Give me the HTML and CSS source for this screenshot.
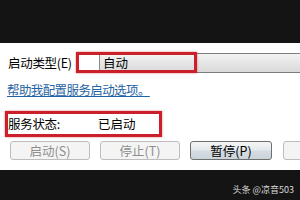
FILE: index.html
```html
<!DOCTYPE html>
<html lang="zh-CN">
<head>
<meta charset="utf-8">
<link rel="stylesheet" href="styles.css">
</head>
<body>
<div class="band-top"></div>
<div class="panel">
  <div class="row-type">
    <span class="label">启动类型(E)</span>
    <div class="combo">
      <span class="combo-blank"></span>
      <span class="combo-value">自动</span>
    </div>
  </div>
  <a class="help" href="#">帮助我配置服务启动选项。</a>
  <div class="row-status">
    <span class="status-label">服务状态:</span>
    <span class="status-value">已启动</span>
  </div>
  <div class="buttons">
    <span class="btn disabled">启动(S)</span>
    <span class="btn disabled">停止(T)</span>
    <span class="btn active">暂停(P)</span>
    <span class="btn disabled last"></span>
  </div>
  <div class="mark mark-type"></div>
  <div class="mark mark-status"></div>
</div>
<div class="band-bottom">
  <span class="watermark">头条 @凉音503</span>
</div>
</body>
</html>
```

FILE: styles.css
```css
html, body {
  margin: 0;
  padding: 0;
  width: 300px;
  height: 200px;
  overflow: hidden;
  background: #fff;
  font-family: "Noto Sans CJK SC", "Noto Sans", sans-serif;
  font-size: 12.5px;
  color: #000;
}

.band-top {
  height: 43px;
  background: #141414;
}

.panel {
  position: relative;
  height: 127px;
  display: flex;
  flex-direction: column;
  overflow: hidden;
}

.row-type {
  margin-top: 10px;
  height: 20px;
  display: flex;
  align-items: center;
}

.label {
  width: 71px;
  padding-left: 8px;
  line-height: 14px;
  white-space: nowrap;
  letter-spacing: -0.3px;
}

.combo {
  flex: 1;
  height: 20px;
  box-sizing: border-box;
  border-top: 1px solid #7c7c7c;
  border-bottom: 1px solid #7c7c7c;
  display: flex;
  align-items: stretch;
}

.combo-blank {
  width: 20px;
  background: #fff;
  border-right: 1px solid #8a8a8a;
}

.combo-value {
  flex: 1;
  padding-left: 3px;
  line-height: 18px;
  background: linear-gradient(#f3f3f3, #e6e6e6 50%, #d9d9d9);
}

.help {
  margin-top: 10px;
  margin-left: 7px;
  line-height: 14px;
  color: #1f63a3;
  text-decoration: underline;
  letter-spacing: -0.6px;
  align-self: flex-start;
}

.row-status {
  margin-top: 20px;
  height: 14px;
  line-height: 14px;
  display: flex;
}

.status-label {
  width: 90px;
  padding-left: 8px;
  letter-spacing: -0.3px;
}

.buttons {
  margin-top: 10px;
  padding-left: 10px;
  display: flex;
  gap: 10px;
}

.btn {
  flex: none;
  width: 80px;
  height: 19px;
  box-sizing: border-box;
  border-radius: 3px;
  display: flex;
  align-items: center;
  justify-content: center;
  line-height: 14px;
}

.btn.disabled {
  border: 1px solid #bdbdbd;
  background: #f4f4f4;
  color: #8e8e8e;
}

.btn.active {
  width: 82px;
  border: 1px solid #6f6f6f;
  background: linear-gradient(#f4f5f6, #e6eaed 45%, #d4dce2 55%, #cbd4da);
  color: #000;
}

.btn.last {
  width: 40px;
  margin-left: 1px;
}

.mark {
  position: absolute;
  box-sizing: border-box;
  border: 3px solid #cb1f29;
  box-shadow: 0 0 2px rgba(190, 20, 30, 0.55);
}

.mark-type {
  left: 76px;
  top: 9px;
  width: 121px;
  height: 21px;
}

.mark-status {
  left: 5px;
  top: 68px;
  width: 157px;
  height: 26px;
}

.band-bottom {
  height: 30px;
  background: #141414;
  display: flex;
  justify-content: flex-end;
  align-items: center;
  padding-right: 6px;
  padding-top: 10px;
  box-sizing: border-box;
}

.watermark {
  font-size: 9px;
  line-height: 12px;
  color: #d8d8d8;
}
```
